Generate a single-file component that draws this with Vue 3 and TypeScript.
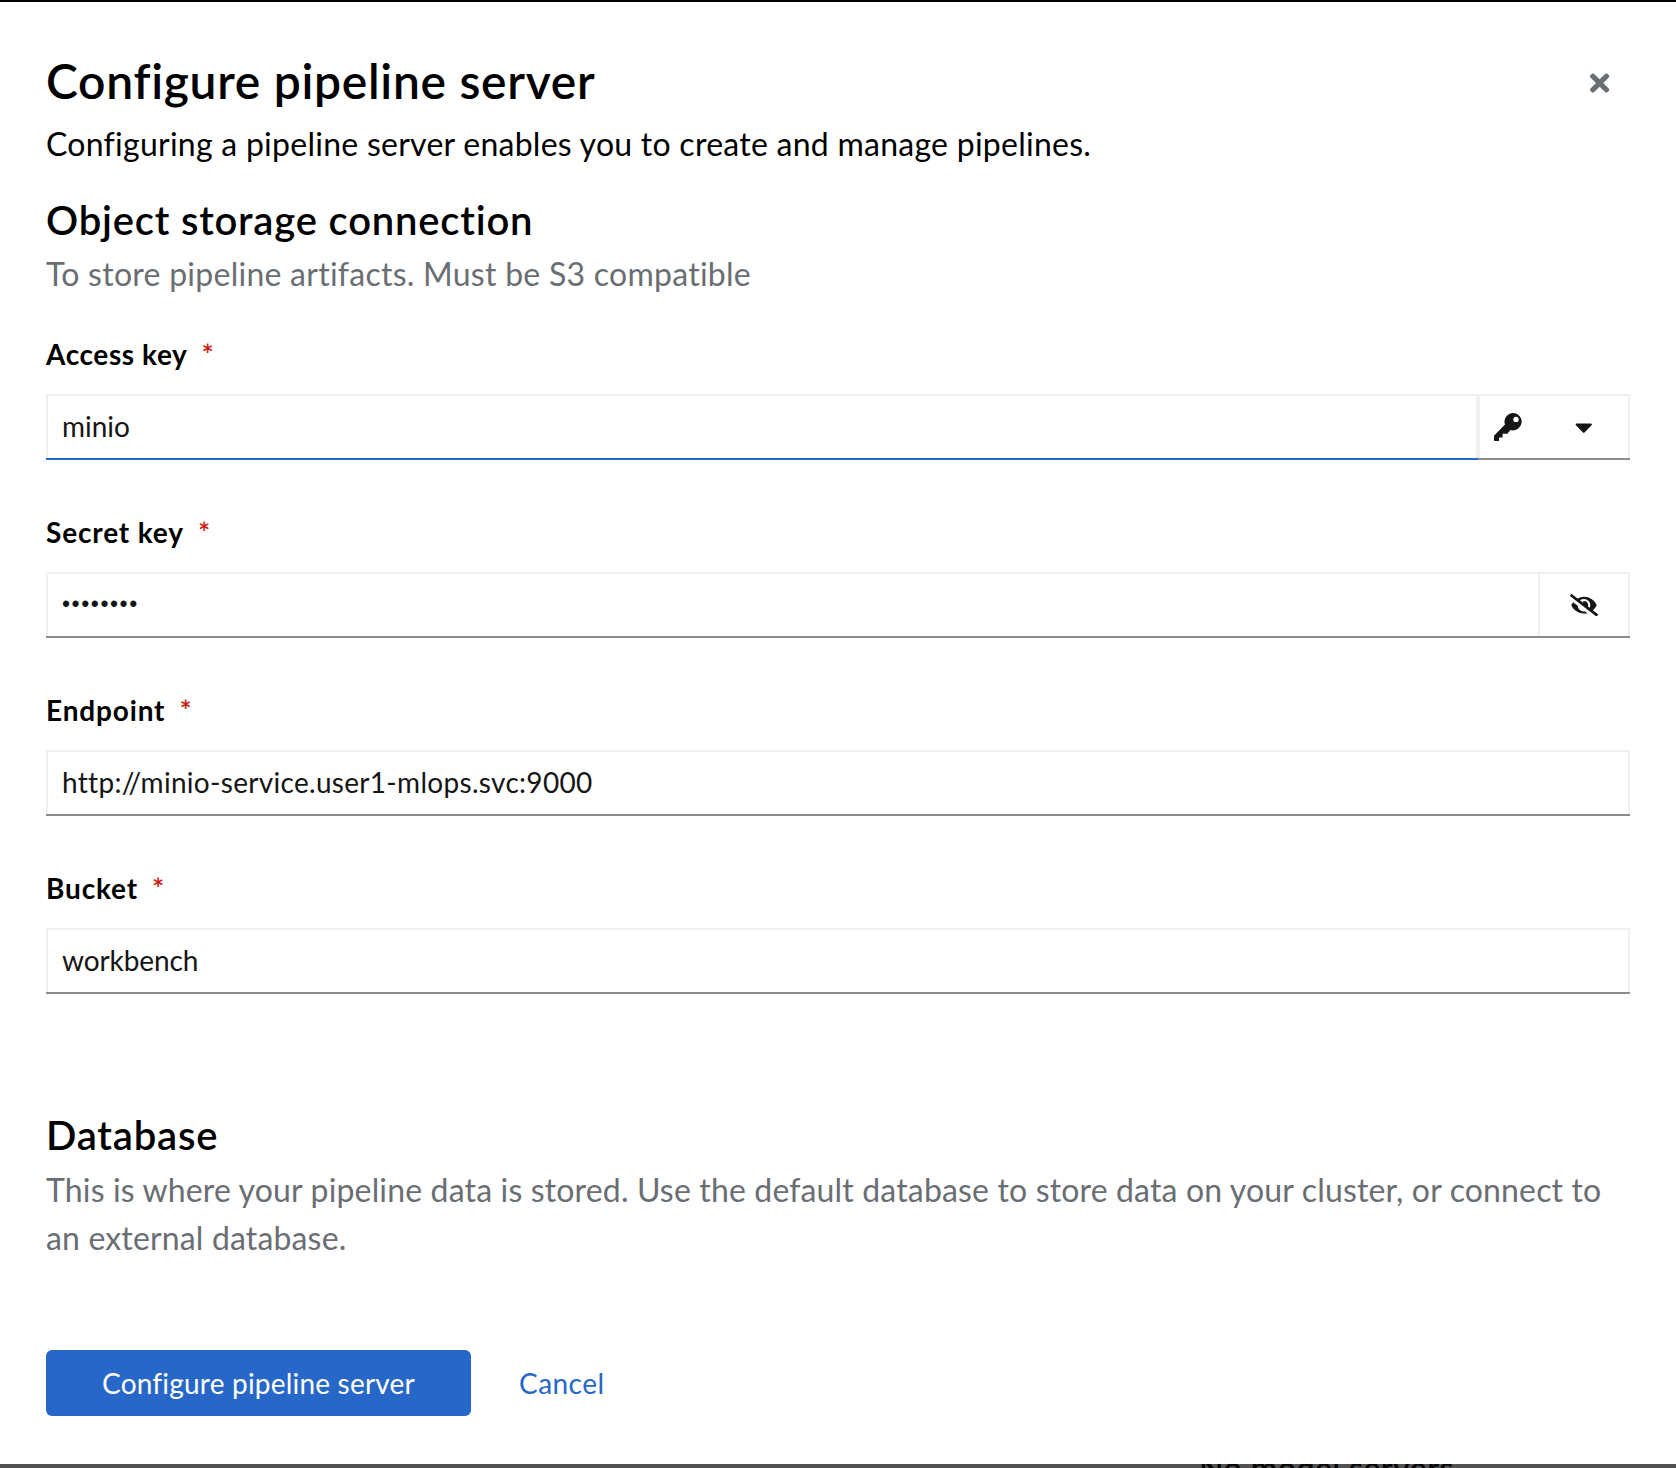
<script setup lang="ts">
import { ref } from 'vue'

const accessKey = ref('minio')
const endpoint = ref('http://minio-service.user1-mlops.svc:9000')
const bucket = ref('workbench')
</script>

<template>
  <div class="screen">
    <section class="modal" role="dialog" aria-labelledby="modal-title">
      <button class="close" type="button" aria-label="Close">
        <svg viewBox="0 0 352 512" width="19.25" height="28" fill="currentColor">
          <path d="M242.72 256l100.07-100.07c12.28-12.28 12.28-32.19 0-44.48l-22.24-22.24c-12.28-12.28-32.19-12.28-44.48 0L176 189.28 75.93 89.21c-12.28-12.28-32.19-12.28-44.48 0L9.21 111.45c-12.28 12.28-12.28 32.19 0 44.48L109.28 256 9.21 356.07c-12.28 12.28-12.28 32.19 0 44.48l22.24 22.24c12.28 12.28 32.2 12.28 44.48 0L176 322.72l100.07 100.07c12.28 12.28 32.2 12.28 44.48 0l22.24-22.24c12.28-12.28 12.28-32.19 0-44.48L242.72 256z" />
        </svg>
      </button>

      <h1 id="modal-title">Configure pipeline server</h1>
      <p class="intro">Configuring a pipeline server enables you to create and manage pipelines.</p>

      <h2 class="storage-title">Object storage connection</h2>
      <p class="hint">To store pipeline artifacts. Must be S3 compatible</p>

      <form class="fields" @submit.prevent>
        <div class="field">
          <label for="access-key">Access key<span class="required">*</span></label>
          <div class="group">
            <input id="access-key" v-model="accessKey" class="control active" type="text" />
            <button class="control toggle" type="button" aria-label="Choose a connection">
              <svg viewBox="0 0 28 28" width="28" height="28" fill="currentColor">
                <path fill-rule="evenodd" d="M19.2 0a8.7 8.7 0 1 1-2.8 17L13.4 20.8H12H8.6V24.4H5V28H0.8Q0 28 0 27.2V22.8L11 11.6A8.7 8.7 0 0 1 19.2 0ZM22 3.7a2.7 2.7 0 1 0 0 5.4a2.7 2.7 0 1 0 0-5.4Z" />
              </svg>
              <svg viewBox="0 0 320 512" width="17.5" height="28" fill="currentColor">
                <path d="M31.3 192h257.3c17.8 0 26.7 21.5 14.1 34.1L174.1 354.7c-7.8 7.8-20.5 7.8-28.3 0L17.2 226.1C4.6 213.5 13.5 192 31.3 192z" />
              </svg>
            </button>
          </div>
        </div>

        <div class="field">
          <span class="label wide">Secret key<span class="required">*</span></span>
          <div class="group">
            <div class="control masked">••••••••</div>
            <button class="control reveal" type="button" aria-label="Show secret key">
              <svg viewBox="0 0 640 512" width="28" height="22.4" fill="currentColor">
                <path d="M320 400c-75.85 0-137.25-58.71-142.9-133.11L72.2 185.82c-13.79 17.3-26.48 35.59-36.72 55.59a32.35 32.35 0 0 0 0 29.19C89.71 376.41 197.07 448 320 448c26.91 0 52.87-4 77.89-10.46L346 397.39a144.13 144.13 0 0 1-26 2.61zm313.82 58.1l-110.55-85.44a331.25 331.25 0 0 0 81.25-102.07 32.35 32.35 0 0 0 0-29.19C550.29 135.59 442.93 64 320 64a308.15 308.15 0 0 0-147.32 37.7L45.46 3.37A16 16 0 0 0 23 6.18L3.37 31.45A16 16 0 0 0 6.18 53.9l588.36 454.73a16 16 0 0 0 22.46-2.81l19.64-25.27a16 16 0 0 0-2.82-22.45zm-183.72-142l-39.3-30.38A94.75 94.75 0 0 0 416 256a94.76 94.76 0 0 0-121.31-92.21A47.65 47.65 0 0 1 304 192a46.64 46.64 0 0 1-1.54 10l-73.61-56.89A142.31 142.31 0 0 1 320 112a143.92 143.92 0 0 1 144 144c0 21.63-5.29 41.79-13.9 60.11z" />
              </svg>
            </button>
          </div>
        </div>

        <div class="field">
          <label class="wide" for="endpoint">Endpoint<span class="required">*</span></label>
          <div class="group">
            <input id="endpoint" v-model="endpoint" class="control url" type="text" />
          </div>
        </div>

        <div class="field">
          <label class="wide" for="bucket">Bucket<span class="required">*</span></label>
          <div class="group">
            <input id="bucket" v-model="bucket" class="control bucket" type="text" />
          </div>
        </div>
      </form>

      <h2 class="database-title">Database</h2>
      <p class="hint database-hint">This is where your pipeline data is stored. Use the default database to store data on your cluster, or connect to an external database.</p>

      <footer class="actions">
        <button class="primary" type="button">Configure pipeline server</button>
        <button class="link" type="button">Cancel</button>
      </footer>
    </section>
    <div class="backdrop"><span class="behind">No model servers</span></div>
  </div>
</template>

<style>
body {
  margin: 0;
  background: #fff;
}
</style>

<style scoped>
.screen {
  box-sizing: border-box;
  display: flex;
  flex-direction: column;
  width: 1676px;
  height: 1468px;
  overflow: hidden;
  border-top: 2px solid #000;
  font-family: Lato, "Open Sans", sans-serif;
  font-variant-ligatures: none;
  color: #000;
}
.modal {
  box-sizing: border-box;
  position: relative;
  height: 1462px;
  flex: none;
  padding: 48px 46px 0;
  background: #fff;
}
button {
  margin: 0;
  padding: 0;
  border: 0;
  background: none;
  font: inherit;
}
svg {
  display: block;
}
.close {
  position: absolute;
  top: 67px;
  right: 66.5px;
  color: #6a6e73;
}
h1,
h2,
p {
  margin: 0;
}
h1 {
  font-size: 48px;
  line-height: 62px;
  font-weight: 600;
  letter-spacing: 0.7px;
}
.intro,
.hint {
  font-size: 32px;
  line-height: 48px;
  letter-spacing: 0.26px;
}
.intro {
  margin-top: 8px;
}
h2 {
  font-size: 40px;
  line-height: 52px;
  font-weight: 600;
  letter-spacing: 0.8px;
}
.storage-title {
  margin-top: 26px;
}
.hint {
  margin-top: 4px;
  color: #6a6e73;
}
.fields {
  display: flex;
  flex-direction: column;
  gap: 54px;
  margin-top: 38px;
}
.field {
  display: flex;
  flex-direction: column;
  gap: 22px;
}
label,
.label {
  display: block;
  height: 36px;
  font-size: 28px;
  line-height: 37px;
  font-weight: 700;
  letter-spacing: 0.6px;
}
.wide {
  letter-spacing: 0.85px;
}
.required {
  margin-left: 14px;
  font-size: 29px;
  font-weight: 600;
  line-height: 1;
  color: #c9190b;
}
.group {
  display: flex;
  height: 66px;
}
.control {
  box-sizing: border-box;
  flex: 1;
  min-width: 0;
  height: 66px;
  margin: 0;
  padding: 0 2px 2px 16px;
  border: 0;
  border-radius: 0;
  outline: 0;
  background: #fff;
  box-shadow: inset 0 -2px #8a8d90, inset 0 0 0 2px #f0f0f0;
  color: #151515;
  font-family: inherit;
  font-size: 28px;
  line-height: 64px;
}
.active {
  box-shadow: inset 0 -2px #2468c8, inset 0 0 0 2px #f0f0f0;
}
.url {
  letter-spacing: 0.3px;
}
.bucket {
  letter-spacing: -0.1px;
}
.toggle {
  display: flex;
  align-items: center;
  justify-content: space-between;
  flex: 0 0 152px;
  padding: 0 37.5px 0 16px;
}
.masked {
  font-family: "Liberation Sans", sans-serif;
  font-size: 23px;
  letter-spacing: 1.55px;
}
.reveal {
  display: flex;
  align-items: center;
  justify-content: center;
  flex: 0 0 92px;
  margin-left: -2px;
  padding: 0;
}
.database-title {
  margin-top: 115px;
}
.database-hint {
  margin-top: 5px;
  letter-spacing: 0.155px;
}
.actions {
  display: flex;
  gap: 48px;
  margin-top: 88px;
}
.primary {
  width: 425px;
  height: 66px;
  padding-bottom: 1px;
  border-radius: 6px;
  background: #2667c8;
  color: #fff;
  font-size: 28px;
  letter-spacing: 0.2px;
}
.link {
  padding-bottom: 1px;
  color: #2667c8;
  font-size: 28px;
  letter-spacing: 0.45px;
}
.backdrop {
  position: relative;
  height: 4px;
  overflow: hidden;
  background: #525252;
}
.behind {
  position: absolute;
  top: -15px;
  left: 1199px;
  font-size: 32px;
  line-height: 38px;
  font-weight: 600;
  letter-spacing: 0.45px;
  white-space: nowrap;
  color: #060606;
}
</style>
